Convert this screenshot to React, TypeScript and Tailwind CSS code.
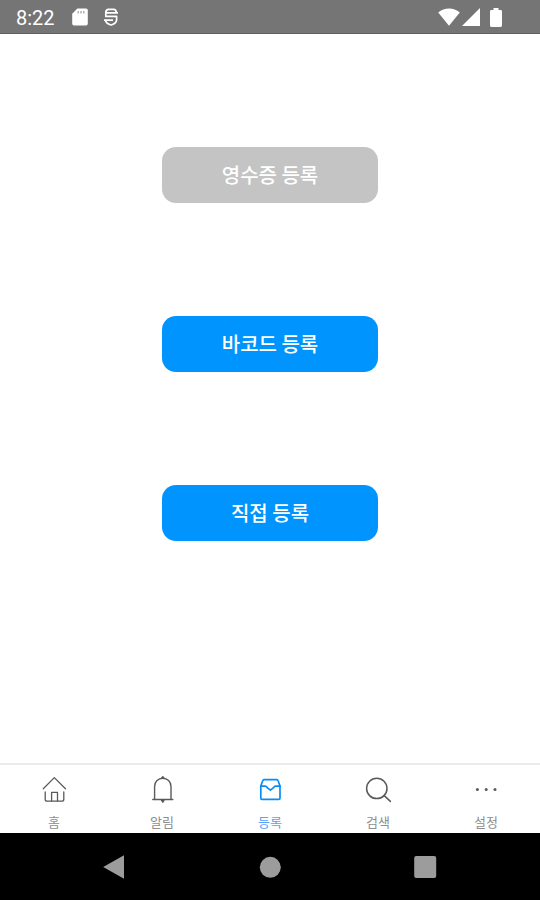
import React, { useState } from "react";

const ICON = "h-7 w-7";

function HomeIcon() {
  return (
    <svg viewBox="0 0 28 28" className={ICON} fill="none" stroke="currentColor" strokeWidth="1.3" strokeLinecap="round" strokeLinejoin="round">
      <path d="M3.3 12.8 14.3 1.6l11.2 11.2" />
      <path d="M5.2 16v7.2q0 2 2 2h14.6q2 0 2-2V16" />
      <path d="M11.6 25v-8.6h5.9V25" />
    </svg>
  );
}

function BellIcon() {
  return (
    <svg viewBox="0 0 28 28" className={ICON} fill="none" stroke="currentColor" strokeWidth="1.4" strokeLinecap="round" strokeLinejoin="round">
      <path d="M6.6 23.4V10.4a8.2 8.2 0 0 1 16.4 0v13" />
      <path d="M4.8 23.5h20" />
      <path d="M13.8 1.8l1-1 1 1z" fill="currentColor" />
      <path d="M13.6 24.4H16l-1.2 1.8z" fill="currentColor" />
    </svg>
  );
}

function TrayIcon() {
  return (
    <svg viewBox="0 0 28 28" className={ICON} fill="none" stroke="currentColor" strokeWidth="1.7" strokeLinecap="round" strokeLinejoin="round">
      <path d="M4.8 10v12.2q0 1.2 1.2 1.2h16.8q1.2 0 1.2-1.2V10l-1.9-5.3q-.3-1-1.3-1H8q-1 0-1.3 1z" />
      <path d="M4.8 10.2h4.4q1.2 0 2 1.4l3.2 2.6 3.2-2.6q.8-1.4 2-1.4H24" />
    </svg>
  );
}

function SearchIcon() {
  return (
    <svg viewBox="0 0 28 28" className={ICON} fill="none" stroke="currentColor" strokeWidth="1.5" strokeLinecap="round">
      <circle cx="12.8" cy="12.4" r="10.2" />
      <path d="m20.2 19.6 6.2 5.8" />
    </svg>
  );
}

function DotsIcon() {
  return (
    <svg viewBox="0 0 28 28" className={ICON} fill="currentColor">
      <circle cx="5.4" cy="13.5" r="1.5" />
      <circle cx="14.2" cy="13.5" r="1.5" />
      <circle cx="23" cy="13.5" r="1.5" />
    </svg>
  );
}

const actions = [
  { label: "영수증 등록", color: "bg-[#c4c4c4]" },
  { label: "바코드 등록", color: "bg-[#0094ff]" },
  { label: "직접 등록", color: "bg-[#0094ff]" },
];

const tabs = [
  { label: "홈", Icon: HomeIcon },
  { label: "알림", Icon: BellIcon },
  { label: "등록", Icon: TrayIcon },
  { label: "검색", Icon: SearchIcon },
  { label: "설정", Icon: DotsIcon },
];

export default function App() {
  const [active, setActive] = useState("등록");

  return (
    <div className="flex min-h-screen w-full flex-col bg-white font-['Noto_Sans_CJK_KR',sans-serif]">
      {/* Status bar */}
      <header className="flex items-center justify-between border-b border-[#606060] bg-[#757575] pt-px pr-[38px] pl-4 text-white">
        <div className="flex items-center gap-4">
          <span className="pt-0.5 font-[Roboto,sans-serif] text-xl leading-[30px]">8:22</span>
          <svg viewBox="0 0 18 18" className="h-[18px] w-[18px]" fill="none">
            <path d="M6.4.5H15q1.8 0 1.8 1.8v13.4q0 1.8-1.8 1.8H3q-1.8 0-1.8-1.8V5.8z" fill="#fff" />
            <path d="M7.2 3v2.4M10 3v2.4M12.800 3v2.400" stroke="#a8a8a8" strokeWidth="1.3" />
          </svg>
          <svg viewBox="0 0 16 18" className="-ml-0.5 h-[18px] w-4" fill="none" stroke="#fff" strokeWidth="1.7" strokeLinejoin="round">
            <path d="M13.6 4.8Q12.8 1.4 11 1.400H5.600Q2.800 1.600 2.800 4.600v3.800h10.800v3.800q-.6 3.600-5.600 4.800-4.400-1-5.400-4.200" />
            <path d="M2.800 4.800H15M1 12.200h9" />
          </svg>
        </div>
        <div className="flex items-center gap-0.5">
          <svg viewBox="0 0 22 18" className="h-[18px] w-[22px]" fill="#fff">
            <path d="M.2 4.400Q5 .4 11 .4t10.800 4L11 17.800z" />
          </svg>
          <svg viewBox="0 0 18 18" className="h-[18px] w-[18px]" fill="#fff">
            <path d="M18 0v18H0z" />
          </svg>
          <svg viewBox="0 0 12 19" className="ml-2 h-[19px] w-3" fill="#fff">
            <path d="M3.5 0h5v2h2.1Q12 2 12 3.400v14.200Q12 19 10.600 19H1.400Q0 19 0 17.600V3.400Q0 2 1.400 2h2.100z" />
          </svg>
        </div>
      </header>

      {/* Actions */}
      <main className="flex flex-1 flex-col items-center gap-[113px] py-[113px]">
        {actions.map(({ label, color }) => (
          <button key={label} type="button" className={`h-14 w-2/5 rounded-[14px] text-xl font-medium text-white ${color}`}>
            {label}
          </button>
        ))}
      </main>

      {/* Tabs */}
      <nav className="flex border-t-2 border-[#ebebeb] bg-white">
        {tabs.map(({ label, Icon }) => (
          <button
            key={label}
            type="button"
            onClick={() => setActive(label)}
            className={`flex flex-1 flex-col items-center pt-[11px] ${active === label ? "text-[#0a8cf5]" : "text-[#5a5a5a]"}`}
          >
            <Icon />
            <span className={`pt-2 pb-px text-[13px] leading-5 ${active === label ? "text-[#5a9ffa]" : "text-[#8e8e8e]"}`}>{label}</span>
          </button>
        ))}
      </nav>

      {/* System buttons */}
      <footer className="flex h-[67px] items-center bg-black px-9 text-[#9c9c9c]">
        <button type="button" aria-label="Back" className="flex flex-1 justify-center">
          <svg viewBox="0 0 24 24" className="h-6 w-6" fill="currentColor">
            <path d="M1.2 12 22 .2v23.6z" />
          </svg>
        </button>
        <button type="button" aria-label="Home" className="flex flex-1 justify-center">
          <svg viewBox="0 0 24 24" className="h-6 w-6" fill="currentColor">
            <circle cx="12.3" cy="12.3" r="10.5" />
          </svg>
        </button>
        <button type="button" aria-label="Recent apps" className="flex flex-1 justify-center">
          <svg viewBox="0 0 24 24" className="h-6 w-6" fill="currentColor">
            <rect x=".2" y="1" width="22" height="22" rx="2" />
          </svg>
        </button>
      </footer>
    </div>
  );
}
